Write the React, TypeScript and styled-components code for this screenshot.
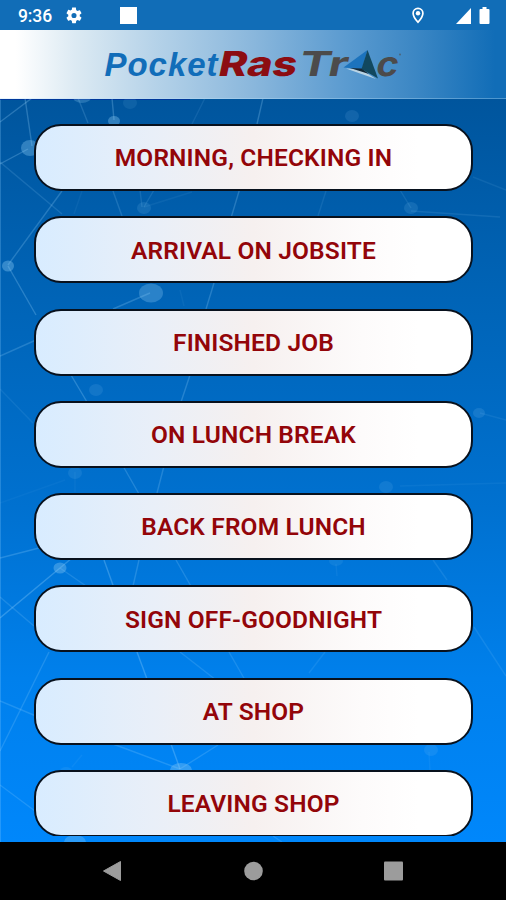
import React from "react";
import styled, { createGlobalStyle } from "styled-components";

const GlobalStyle = createGlobalStyle`
  * { box-sizing: border-box; }
  html, body { margin: 0; padding: 0; background: #000; }
`;

const Screen = styled.div`
  width: 506px;
  height: 900px;
  display: flex;
  flex-direction: column;
  overflow: hidden;
  font-family: Roboto, "Liberation Sans", sans-serif;
`;

const StatusBar = styled.div`
  height: 30px;
  flex: none;
  display: flex;
  align-items: center;
  padding: 1px 16px 0 18px;
  background: #116db7;
  color: #fff;
`;

const Clock = styled.span`
  width: 48px;
  font-size: 17.5px;
  font-weight: 500;
  line-height: 30px;
  letter-spacing: -0.1px;
`;

const StatusIcon = styled.svg<{ $gap?: number }>`
  display: block;
  flex: none;
  margin-left: ${(p) => p.$gap ?? 0}px;
`;

const Spacer = styled.div`
  flex: 1;
`;

const Header = styled.header`
  height: 69px;
  flex: none;
  border-bottom: 1px solid rgba(190, 225, 250, 0.35);
  background: linear-gradient(90deg, #fff 0, #fff 16px, #dceaf3 75px, #b3d1e8 160px, #8ab7dc 253px, #5b9bd0 345px, #3c87c4 415px, #116db7 495px);
`;

const Logo = styled.svg`
  display: block;
  width: 506px;
  height: 68px;
`;

const Content = styled.main`
  position: relative;
  height: 743px;
  flex: none;
  overflow: hidden;
  background: linear-gradient(180deg, #00559d 0%, #0064b7 27%, #0071d0 55%, #0080ec 78%, #0087fb 100%);
`;

const Network = styled.svg`
  position: absolute;
  inset: 0;
`;

const ButtonList = styled.div`
  position: relative;
  height: 737px;
  overflow: hidden;
  padding: 25px 33px 0 34px;
  display: flex;
  flex-direction: column;
  gap: 25.3px;
`;

const StatusButton = styled.button`
  height: 67px;
  flex: none;
  padding: 2px 0 0;
  border: 2px solid #08111d;
  border-radius: 27px;
  background: linear-gradient(90deg, #d8ecff 0%, #e9eff8 27%, #f6f0ef 50%, #fdfbfb 75%, #fff 88%);
  color: #930509;
  font: 600 24.5px/1 Roboto, "Liberation Sans", sans-serif;
  letter-spacing: 0.15px;
  white-space: nowrap;
`;

const NavBar = styled.nav`
  height: 58px;
  flex: none;
  display: flex;
  justify-content: space-between;
  padding: 18px 102px 0;
  background: #000;
`;

const labels = [
  "MORNING, CHECKING IN",
  "ARRIVAL ON JOBSITE",
  "FINISHED JOB",
  "ON LUNCH BREAK",
  "BACK FROM LUNCH",
  "SIGN OFF-GOODNIGHT",
  "AT SHOP",
  "LEAVING SHOP",
];

// [x1, y1, x2, y2, opacity]
const links: number[][] = [
  [0, 122, 32, 98, 0.3],
  [25, 98, 32, 146, 0.3],
  [28, 149, 0, 164, 0.3],
  [0, 162, 62, 214, 0.17],
  [62, 191, 8, 265, 0.27],
  [8, 266, 36, 315, 0.3],
  [78, 98, 88, 123, 0.2],
  [112, 98, 114, 120, 0.3],
  [205, 98, 192, 124, 0.12],
  [263, 98, 257, 124, 0.3],
  [113, 191, 122, 216, 0.2],
  [140, 190, 142, 207, 0.15],
  [154, 190, 144, 207, 0.15],
  [144, 207, 192, 192, 0.08],
  [82, 191, 74, 214, 0.07],
  [240, 188, 231, 218, 0.27],
  [326, 191, 318, 216, 0.12],
  [400, 190, 411, 208, 0.13],
  [411, 211, 500, 217, 0.13],
  [473, 177, 506, 190, 0.1],
  [214, 283, 206, 309, 0.27],
  [150, 293, 113, 309, 0.27],
  [180, 290, 184, 306, 0.07],
  [36, 340, 0, 356, 0.25],
  [0, 389, 33, 423, 0.1],
  [71, 375, 87, 402, 0.3],
  [190, 375, 181, 402, 0.27],
  [123, 466, 139, 494, 0.25],
  [164, 466, 157, 493, 0.25],
  [75, 472, 75, 492, 0.06],
  [0, 503, 65, 480, 0.05],
  [0, 558, 39, 548, 0.27],
  [0, 618, 60, 568, 0.34],
  [60, 568, 72, 558, 0.3],
  [60, 568, 86, 586, 0.2],
  [0, 597, 34, 626, 0.2],
  [104, 560, 114, 588, 0.34],
  [139, 560, 133, 586, 0.25],
  [176, 560, 192, 588, 0.22],
  [49, 652, 0, 751, 0.23],
  [0, 701, 36, 716, 0.23],
  [137, 652, 147, 679, 0.34],
  [180, 652, 216, 680, 0.2],
  [229, 652, 245, 680, 0.2],
  [325, 652, 309, 673, 0.13],
  [433, 560, 447, 580, 0.14],
  [474, 627, 506, 676, 0.14],
  [480, 413, 506, 420, 0.1],
  [400, 486, 506, 483, 0.07],
  [113, 744, 180, 769, 0.24],
  [171, 744, 180, 769, 0.34],
  [218, 745, 180, 769, 0.23],
  [0, 785, 35, 811, 0.22],
  [82, 755, 72, 767, 0.08],
  [429, 752, 430, 771, 0.08],
  [273, 836, 282, 842, 0.2],
  [336, 564, 337, 576, 0.08],
];

// [cx, cy, rx, ry, opacity]
const nodes: number[][] = [
  [82, 97, 9, 6, 0.25],
  [130, 103, 7, 6, 0.1],
  [114, 121, 6, 5, 0.36],
  [30, 148, 9, 8, 0.35],
  [352, 116, 7, 6, 0.13],
  [144, 208, 7, 6, 0.14],
  [411, 208, 7, 6, 0.14],
  [8, 266, 6, 5.5, 0.38],
  [151, 293, 12, 9.5, 0.3],
  [96, 390, 7, 6, 0.13],
  [479, 413, 6, 5, 0.15],
  [75, 473, 7, 6, 0.12],
  [386, 487, 7, 6, 0.12],
  [60, 568, 6.5, 5.5, 0.36],
  [336, 561, 7, 5, 0.1],
  [181, 770, 11, 7, 0.36],
  [66, 771, 6, 4, 0.1],
  [431, 750, 7, 6, 0.13],
  [75, 842, 11, 7, 0.32],
];

function NetworkBackdrop() {
  return (
    <Network width="506" height="743" viewBox="0 99 506 743" aria-hidden="true">
      <path d="M0 99H1V842H0Z" fill="#8bd0ff" opacity=".25" />
      <path d="M0 99H190V100H0Z" fill="#00259a" opacity=".6" />
      {links.map(([x1, y1, x2, y2, o], i) => (
        <line key={i} x1={x1} y1={y1} x2={x2} y2={y2} stroke="#9fd9ff" strokeWidth="1.4" opacity={o * 0.85} />
      ))}
      {nodes.map(([cx, cy, rx, ry, o], i) => (
        <ellipse key={i} cx={cx} cy={cy} rx={rx} ry={ry} fill="#8acbf5" opacity={o} />
      ))}
    </Network>
  );
}

function BrandLogo() {
  return (
    <Logo viewBox="0 30 506 68" role="img" aria-label="PocketRasTrac">
      <text x="104.5" y="76.3" fontFamily="Liberation Sans" fontWeight="700" fontStyle="italic" fontSize="33" fill="#116db9" textLength="113" lengthAdjust="spacing">Pocket</text>
      <g transform="translate(0 76.3) skewX(-12)" fontFamily="Inter" fontSize="34.4">
        <text x="217" y="0" fontWeight="800" fill="#8c0d12" textLength="78" lengthAdjust="spacingAndGlyphs">Ras</text>
        <text x="297" y="0" fontWeight="700" fill="#4c4b4b" textLength="49" lengthAdjust="spacingAndGlyphs">Tr</text>
        <text x="374.500" y="0" fontWeight="700" fill="#4c4b4b" textLength="22" lengthAdjust="spacingAndGlyphs">c</text>
      </g>
      <path d="M346 68.5 361 69.5 376 79 360 73.500Z" fill="#b9d3e4" />
      <path d="M367.5 50 343.5 67.5 362 69Z" fill="#1c73bd" />
      <path d="M367.5 50 378 78.5 361.5 69Z" fill="#11485f" />
      <path d="M350 68 361.5 68.5 369 74 358 70.5Z" fill="#142937" />
      <circle cx="400" cy="54.5" r="1" fill="#4c6579" />
    </Logo>
  );
}

export default function App() {
  return (
    <>
      <GlobalStyle />
      <Screen>
        <StatusBar>
          <Clock>9:36</Clock>
          <StatusIcon width="16" height="17" viewBox="2 2 20 20">
            <path fill="#fff" d="M19.14 12.94c.04-.3.06-.61.06-.94s-.02-.64-.07-.94l2.03-1.58c.18-.14.23-.41.12-.61l-1.92-3.32c-.12-.22-.37-.29-.59-.22l-2.39.96a7 7 0 0 0-1.62-.94l-.36-2.54A.48.48 0 0 0 13.92 2h-3.84c-.24 0-.43.17-.47.41l-.36 2.54c-.59.24-1.13.57-1.62.94l-2.39-.96c-.22-.08-.47 0-.59.22L2.74 8.87c-.12.21-.08.47.12.61l2.03 1.58a7.5 7.5 0 0 0 0 1.88l-2.03 1.58c-.18.14-.23.41-.12.61l1.92 3.32c.12.22.37.29.59.22l2.39-.96c.5.38 1.03.7 1.62.94l.36 2.54c.05.24.24.41.48.41h3.84c.24 0 .44-.17.47-.41l.36-2.54c.59-.24 1.13-.56 1.62-.94l2.39.96c.22.08.47 0 .59-.22l1.92-3.32c.12-.22.07-.47-.12-.61zM12 15.2a3.2 3.2 0 1 1 0-6.4 3.2 3.2 0 0 1 0 6.4z" />
          </StatusIcon>
          <StatusIcon $gap={38} width="17" height="17" viewBox="0 0 17 17">
            <rect width="17" height="17" fill="#fff" />
          </StatusIcon>
          <Spacer />
          <StatusIcon width="12" height="17" viewBox="0 0 12 17">
            <path d="M6 1.3A4.9 4.9 0 0 0 1.1 6.200C1.100 9.800 6 15.300 6 15.300S10.900 9.800 10.900 6.200A4.900 4.900 0 0 0 6 1.300Z" fill="none" stroke="#fff" strokeWidth="1.7" />
            <circle cx="6" cy="6.200" r="2.200" fill="#fff" />
          </StatusIcon>
          <StatusIcon $gap={32} width="15" height="16" viewBox="0 0 15 16">
            <path d="M0 16 15 0V16Z" fill="#fff" />
          </StatusIcon>
          <StatusIcon $gap={8} width="11" height="17" viewBox="0 0 11 17">
            <path d="M3.500 0H7.500V2H9.500Q10.500 2 10.500 3V16Q10.500 17 9.500 17H1.500Q.5 17 .5 16V3Q.5 2 1.500 2H3.500Z" fill="#fff" />
          </StatusIcon>
        </StatusBar>
        <Header>
          <BrandLogo />
        </Header>
        <Content>
          <NetworkBackdrop />
          <ButtonList>
            {labels.map((label) => (
              <StatusButton key={label}>{label}</StatusButton>
            ))}
          </ButtonList>
        </Content>
        <NavBar>
          <StatusIcon width="20" height="22" viewBox="0 0 20 22">
            <path d="M1.500 11 18.500 1.500V20.500Z" fill="#9c9c9c" stroke="#9c9c9c" strokeLinejoin="round" />
          </StatusIcon>
          <StatusIcon width="20" height="22" viewBox="0 0 20 22">
            <circle cx="10.500" cy="11" r="9.300" fill="#9c9c9c" />
          </StatusIcon>
          <StatusIcon width="20" height="22" viewBox="0 0 20 22">
            <rect x="0" y="1.500" width="19" height="19" rx="1" fill="#9c9c9c" />
          </StatusIcon>
        </NavBar>
      </Screen>
    </>
  );
}
